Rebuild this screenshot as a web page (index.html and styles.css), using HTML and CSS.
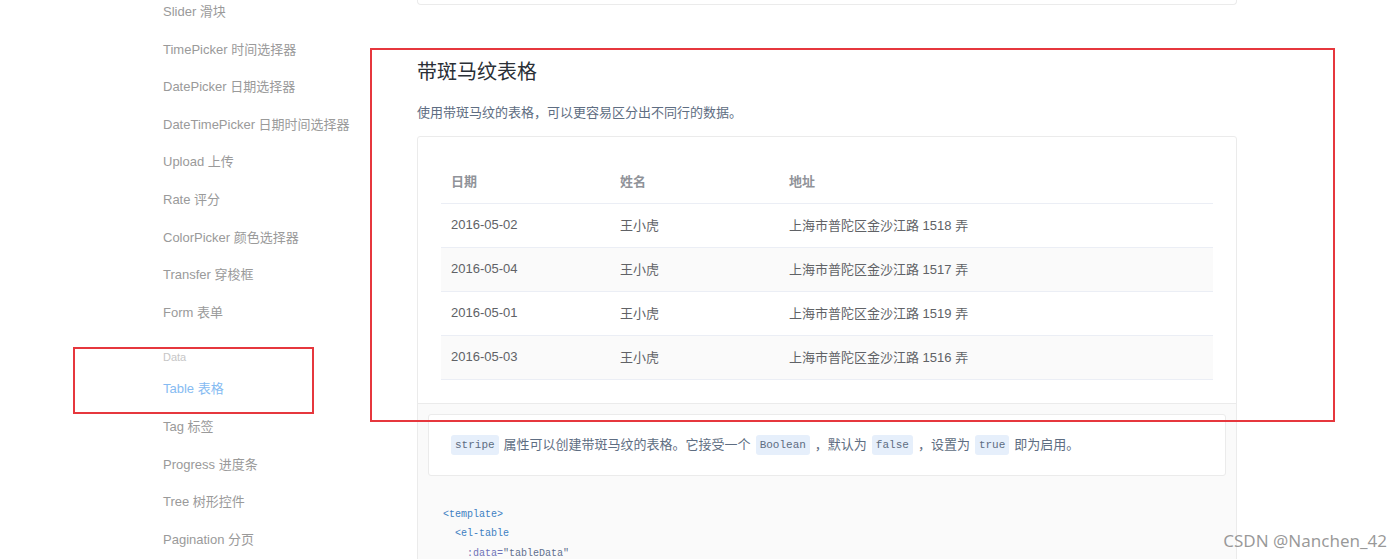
FILE: index.html
```html
<!DOCTYPE html>
<html lang="zh-CN">
<head>
<meta charset="utf-8">
<title>Table 表格</title>
<link rel="stylesheet" href="styles.css">
</head>
<body>
<div class="page">
  <aside class="sidebar">
    <ul class="nav">
      <li class="nav-item">Slider 滑块</li>
      <li class="nav-item">TimePicker 时间选择器</li>
      <li class="nav-item">DatePicker 日期选择器</li>
      <li class="nav-item">DateTimePicker 日期时间选择器</li>
      <li class="nav-item">Upload 上传</li>
      <li class="nav-item">Rate 评分</li>
      <li class="nav-item">ColorPicker 颜色选择器</li>
      <li class="nav-item">Transfer 穿梭框</li>
      <li class="nav-item">Form 表单</li>
      <li class="nav-group">Data</li>
      <li class="nav-item active">Table 表格</li>
      <li class="nav-item">Tag 标签</li>
      <li class="nav-item">Progress 进度条</li>
      <li class="nav-item">Tree 树形控件</li>
      <li class="nav-item">Pagination 分页</li>
    </ul>
  </aside>
  <main class="content">
    <div class="prev-card"></div>
    <h3 class="title">带斑马纹表格</h3>
    <p class="lead">使用带斑马纹的表格，可以更容易区分出不同行的数据。</p>
    <div class="demo-block">
      <div class="source">
        <table class="el-table">
          <thead>
            <tr><th class="c1">日期</th><th class="c2">姓名</th><th>地址</th></tr>
          </thead>
          <tbody>
            <tr><td>2016-05-02</td><td>王小虎</td><td>上海市普陀区金沙江路 1518 弄</td></tr>
            <tr class="striped"><td>2016-05-04</td><td>王小虎</td><td>上海市普陀区金沙江路 1517 弄</td></tr>
            <tr><td>2016-05-01</td><td>王小虎</td><td>上海市普陀区金沙江路 1519 弄</td></tr>
            <tr class="striped"><td>2016-05-03</td><td>王小虎</td><td>上海市普陀区金沙江路 1516 弄</td></tr>
          </tbody>
        </table>
      </div>
      <div class="meta">
        <div class="description">
          <code>stripe</code>属性可以创建带斑马纹的表格。它接受一个<code>Boolean</code>，默认为<code>false</code>，设置为<code>true</code>即为启用。
        </div>
        <pre class="code"><span class="tag">&lt;template&gt;</span>
  <span class="tag">&lt;el-table</span>
    <span class="attr">:data=</span><span class="str">"tableData"</span></pre>
      </div>
    </div>
  </main>
</div>
<div class="annot annot-side"></div>
<div class="annot annot-main"></div>
<div class="watermark">CSDN @Nanchen_42</div>
</body>
</html>
```

FILE: styles.css
```css
* { box-sizing: border-box; }
html, body {
  margin: 0;
  padding: 0;
  height: 559px;
  overflow: hidden;
  background: #fff;
}
body {
  font-family: "Liberation Sans", Arial, "Noto Sans CJK SC", sans-serif;
  position: relative;
}
.page {
  display: flex;
  align-items: flex-start;
}
.sidebar {
  width: 417px;
  flex: none;
  padding-left: 163px;
}
.nav {
  list-style: none;
  margin: -7px 0 0;
  padding: 0;
}
.nav-item {
  font-size: 13px;
  line-height: 37.6px;
  height: 37.6px;
  color: #9a9a9a;
  white-space: nowrap;
}
.nav-item.active {
  color: #86bbf2;
}
.nav-group {
  font-size: 11px;
  color: #c6c6c6;
  padding-top: 13px;
  line-height: 26px;
  height: 39px;
}
.content {
  width: 820px;
  flex: none;
}
.prev-card {
  height: 5px;
  border: 1px solid #ebebeb;
  border-top: 0;
  border-radius: 0 0 4px 4px;
}
.title {
  margin: 53px 0 0;
  font-size: 20px;
  font-weight: 400;
  line-height: 28px;
  color: #2a2f36;
}
.lead {
  margin: 17px 0 0;
  font-size: 13px;
  line-height: 20px;
  color: #5e6d82;
}
.demo-block {
  margin-top: 13px;
  border: 1px solid #ebebeb;
  border-radius: 3px;
}
.source {
  padding: 22px 23px 23px;
  border-bottom: 1px solid #ebebeb;
}
.el-table {
  width: 100%;
  border-collapse: collapse;
  font-size: 13px;
  color: #606266;
}
.el-table th {
  text-align: left;
  font-weight: 700;
  color: #909399;
  height: 44px;
  padding: 0 10px;
  border-bottom: 1px solid #ebeef5;
}
.el-table th.c1, .el-table th.c2 { width: 169px; }
.el-table td {
  height: 44px;
  padding: 0 10px 1px;
  border-bottom: 1px solid #ebeef5;
}
.el-table tr.striped td {
  background: #fafafa;
}
.meta {
  background: #fafafa;
  padding: 10px;
}
.description {
  background: #fff;
  border: 1px solid #ebebeb;
  border-radius: 3px;
  padding: 19px 17px;
  font-size: 13px;
  line-height: 22px;
  color: #5e6d82;
  white-space: nowrap;
}
.description code {
  display: inline-block;
  font-family: "Liberation Mono", "DejaVu Sans Mono", monospace;
  font-size: 11px;
  line-height: 20px;
  background: #e6effb;
  color: #5e6d82;
  padding: 0 4px;
  margin: 0 5px;
  border-radius: 3px;
  vertical-align: middle;
}
.code {
  margin: 0;
  padding: 29px 15px;
  font-family: "Liberation Mono", "DejaVu Sans Mono", monospace;
  font-size: 10px;
  line-height: 19.5px;
  color: #5e6d82;
}
.tag { color: #3d7fc2; }
.attr { color: #6f72b8; }
.str { color: #5f6f8e; }
.annot {
  position: absolute;
  border: 2px solid #e6373d;
  pointer-events: none;
}
.annot-side {
  left: 73px;
  top: 347px;
  width: 241px;
  height: 67px;
}
.annot-main {
  left: 370px;
  top: 48px;
  width: 965px;
  height: 374px;
}
.watermark {
  position: absolute;
  right: 13px;
  top: 529px;
  font-family: "Noto Sans", "DejaVu Sans", sans-serif;
  font-size: 17px;
  line-height: 24px;
  color: rgba(120, 120, 120, 0.75);
  white-space: nowrap;
}
```
